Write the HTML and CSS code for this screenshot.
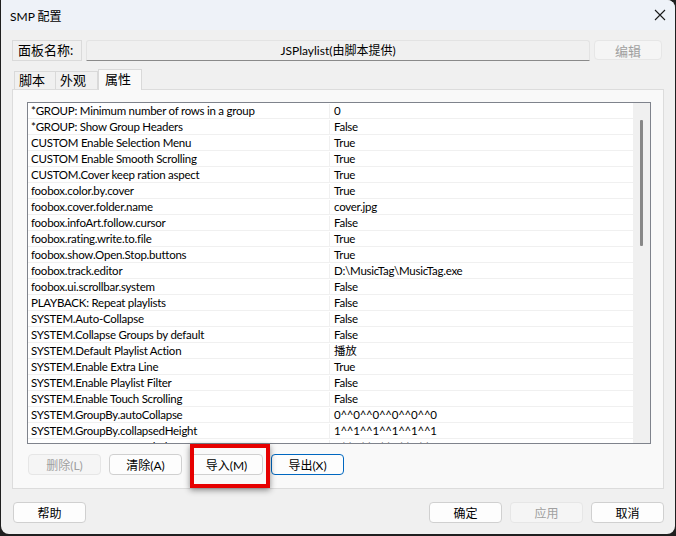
FILE: index.html
```html
<!DOCTYPE html>
<html lang="zh-CN">
  <head>
    <meta charset="UTF-8" />
    <title>SMP 配置</title>
    <link rel="stylesheet" href="styles.css">
  </head>
  <body>
    <div class="window">
      <div class="titlebar">
        <span>SMP 配置</span>
        <svg class="close" width="12" height="12" viewBox="0 0 12 12">
          <path d="M1 1 L11 11 M11 1 L1 11" stroke="#1a1a1a" stroke-width="1.1" fill="none"/>
        </svg>
      </div>

      <div class="content">
        <div class="name-row">
          <div class="name-label">面板名称:</div>
          <div class="name-field">JSPlaylist(由脚本提供)</div>
          <button class="btn disabled edit-btn">编辑</button>
        </div>

        <div class="tabs">
          <div class="tab">脚本</div>
          <div class="tab">外观</div>
          <div class="tab active">属性</div>
        </div>

        <div class="panel">
          <div class="list">
            <div class="rows">
              <div class="row"><span class="key">*GROUP: Minimum number of rows in a group</span><span class="val">0</span></div>
              <div class="row"><span class="key">*GROUP: Show Group Headers</span><span class="val">False</span></div>
              <div class="row"><span class="key">CUSTOM Enable Selection Menu</span><span class="val">True</span></div>
              <div class="row"><span class="key">CUSTOM Enable Smooth Scrolling</span><span class="val">True</span></div>
              <div class="row"><span class="key">CUSTOM.Cover keep ration aspect</span><span class="val">True</span></div>
              <div class="row"><span class="key">foobox.color.by.cover</span><span class="val">True</span></div>
              <div class="row"><span class="key">foobox.cover.folder.name</span><span class="val">cover.jpg</span></div>
              <div class="row"><span class="key">foobox.infoArt.follow.cursor</span><span class="val">False</span></div>
              <div class="row"><span class="key">foobox.rating.write.to.file</span><span class="val">True</span></div>
              <div class="row"><span class="key">foobox.show.Open.Stop.buttons</span><span class="val">True</span></div>
              <div class="row"><span class="key">foobox.track.editor</span><span class="val">D:\MusicTag\MusicTag.exe</span></div>
              <div class="row"><span class="key">foobox.ui.scrollbar.system</span><span class="val">False</span></div>
              <div class="row"><span class="key">PLAYBACK: Repeat playlists</span><span class="val">False</span></div>
              <div class="row"><span class="key">SYSTEM.Auto-Collapse</span><span class="val">False</span></div>
              <div class="row"><span class="key">SYSTEM.Collapse Groups by default</span><span class="val">False</span></div>
              <div class="row"><span class="key">SYSTEM.Default Playlist Action</span><span class="val">播放</span></div>
              <div class="row"><span class="key">SYSTEM.Enable Extra Line</span><span class="val">True</span></div>
              <div class="row"><span class="key">SYSTEM.Enable Playlist Filter</span><span class="val">False</span></div>
              <div class="row"><span class="key">SYSTEM.Enable Touch Scrolling</span><span class="val">False</span></div>
              <div class="row"><span class="key">SYSTEM.GroupBy.autoCollapse</span><span class="val">0^^0^^0^^0^^0^^0</span></div>
              <div class="row"><span class="key">SYSTEM.GroupBy.collapsedHeight</span><span class="val">1^^1^^1^^1^^1^^1</span></div>
              <div class="row partial"><span class="key">SYSTEM.GroupBy.expandedGroups</span><span class="val">0^^0^^0^^0^^0^^0</span></div>
            </div>
            <div class="scrollbar"><div class="thumb"></div></div>
          </div>

          <div class="actions">
            <button class="btn disabled">删除(L)</button>
            <button class="btn">清除(A)</button>
            <button class="btn">导入(M)</button>
            <button class="btn focused">导出(X)</button>
          </div>
        </div>
      </div>

      <div class="footer">
        <button class="btn">帮助</button>
        <div class="spacer"></div>
        <button class="btn">确定</button>
        <button class="btn disabled">应用</button>
        <button class="btn">取消</button>
      </div>

      <!-- annotation box around the import button -->
      <div class="highlight"></div>
    </div>
  </body>
</html>
```

FILE: styles.css
```css
* {
  margin: 0;
  padding: 0;
  box-sizing: border-box;
}

body {
  background: #1f1f1f;
  font-family: Lato, "Noto Sans CJK SC", sans-serif;
  font-size: 12px;
  color: #000;
  width: 676px;
  height: 536px;
  overflow: hidden;
}

.window {
  position: relative;
  width: 674px;
  height: 534px;
  margin-left: 1px;
  background: #f0f0f0;
  border-radius: 0 8px 8px 8px;
  overflow: hidden;
  display: flex;
  flex-direction: column;
}

.titlebar {
  height: 30px;
  background: #eef2f8;
  display: flex;
  align-items: center;
  justify-content: space-between;
  padding: 0 9px 0 9px;
  font-size: 12px;
}

.close {
  display: block;
}

.content {
  padding: 10px 11px 0 11px;
}

.name-row {
  display: flex;
  height: 21px;
  gap: 4px;
}

.name-label {
  width: 70px;
  border: 1px solid #dadada;
  background: #f0f0f0;
  padding-left: 5px;
  line-height: 19px;
  font-size: 13px;
}

.name-field {
  width: 504px;
  border: 1px solid #e3e3e3;
  border-bottom: 1px solid #8a8a8a;
  background: #f0f0f0;
  text-align: center;
  line-height: 19px;
  border-radius: 3px 3px 0 0;
}

.btn {
  width: 73px;
  height: 21px;
  border: 1px solid #d0d0d0;
  background: #fdfdfd;
  border-radius: 4px;
  font-family: inherit;
  font-size: 12px;
  color: #000;
}

.btn.disabled {
  background: #f5f5f5;
  border-color: #e6e6e6;
  color: #a0a0a0;
}

.btn.focused {
  border-color: #0067c0;
}

.edit-btn {
  width: 68px;
  height: 20px;
  font-size: 13px;
  color: #8c8c8c;
}

.tabs {
  display: flex;
  align-items: flex-end;
  height: 21px;
  margin-top: 7px;
  padding-left: 2px;
}

.tab {
  height: 18px;
  width: 42px;
  border: 1px solid #d9d9d9;
  border-bottom: none;
  background: #f0f0f0;
  padding-left: 4px;
  line-height: 17px;
  font-size: 13px;
}

.tab + .tab {
  border-left: none;
}

.tab.active {
  height: 21px;
  width: 44px;
  background: #f9f9f9;
  border-left: 1px solid #d9d9d9;
  padding-left: 6px;
  line-height: 19px;
  position: relative;
  top: 1px;
}

.panel {
  width: 652px;
  height: 400px;
  border: 1px solid #dcdcdc;
  background: #f9f9f9;
  padding: 12px 12px 0 14px;
}

.list {
  display: flex;
  width: 624px;
  height: 342px;
  border: 1px solid #7f838c;
  background: #fff;
}

.rows {
  flex: 1;
  overflow: hidden;
}

.row {
  display: flex;
  height: 16px;
  border-bottom: 1px solid #f0f0f0;
  padding-top: 1px;
  line-height: 14px;
  font-size: 11.5px;
  letter-spacing: -0.25px;
  white-space: nowrap;
}

.row.partial {
  height: 5px;
  overflow: hidden;
  border-bottom: none;
}

.key {
  width: 302px;
  padding-left: 3px;
  border-right: 1px solid #f0f0f0;
}

.val {
  padding-left: 4px;
}

.scrollbar {
  width: 17px;
  background: #f0f0f0;
  padding: 17px 0 0 7px;
}

.thumb {
  width: 3px;
  height: 126px;
  background: #878787;
  border-radius: 1px;
}

.actions {
  display: flex;
  gap: 8px;
  margin-top: 10px;
  padding-left: 1px;
}

.footer {
  display: flex;
  gap: 8px;
  padding: 13px 11px 0 12px;
}

.spacer {
  flex: 1;
}

.highlight {
  position: absolute;
  left: 189px;
  top: 444px;
  width: 80px;
  height: 44px;
  border: 4px solid #e60000;
  box-shadow: 0 2px 6px rgba(0, 0, 0, 0.45);
}
```
